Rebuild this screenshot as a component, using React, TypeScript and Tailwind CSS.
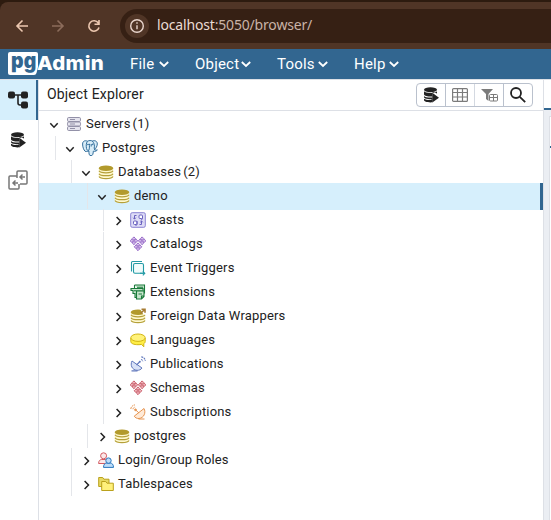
import React from "react";
import type { ReactNode } from "react";

const Chevron = ({ open }: { open?: boolean }) => (
  <svg width="16" height="16" viewBox="0 0 16 16" fill="none" stroke="#222" strokeWidth="1.500" className="shrink-0">
    {open ? <path d="M4.300 7.300 8 11.200l3.700-3.900" /> : <path d="M6.600 5 10.500 9l-3.900 4" />}
  </svg>
);

const Db = ({ arrow }: { arrow?: boolean }) => (
  <g>
    <path d="M.8 4v8.500C.8 14 4 15 8 15s7.200-1 7.200-2.500V4z" fill="#fff9cf" />
    <path d="M1 6.800c.6 1.300 3.500 2 7 2s6.400-.7 7-2M1 9.700c.6 1.300 3.500 2 7 2s6.400-.7 7-2M1 12.500c.6 1.400 3.500 2.100 7 2.100s6.400-.7 7-2.100" fill="none" stroke="#b5a03a" strokeWidth="1.200" />
    <ellipse cx="8" cy="4.200" rx="7.300" ry="2.800" fill="#b29a2c" />
    {arrow && (
      <g>
        <path d="M9.500 0H16v6.500h-2.500z" fill="#fff" />
        <path d="M10.500 5.500 14.300 1.700M11.500 1.300H15v3.500" stroke="#a67b32" strokeWidth="1.600" fill="none" />
      </g>
    )}
  </g>
);

const Cluster = ({ c, f }: { c: string; f: string }) => (
  <g fill={f} stroke={c} strokeWidth=".9">
    {[[3.9, 4.800], [12.100, 4.800], [8, 10.800]].map(([cx, cy]) => (
      <g key={cx}>
        <path d={`M${cx} ${cy - 3.900}l1.700 1.700-1.700 1.700-1.700-1.700z`} />
        <path d={`M${cx - 2.100} ${cy - 1.700}l1.700 1.700-1.700 1.700-1.700-1.700z`} />
        <path d={`M${cx + 2.100} ${cy - 1.700}l1.700 1.700-1.700 1.700-1.700-1.700z`} />
        <path d={`M${cx} ${cy + 0.5}l1.700 1.700-1.700 1.700-1.700-1.700z`} />
      </g>
    ))}
  </g>
);

const icons: Record<string, ReactNode> = {
  servers: (
    <g fill="#e5e4ee" stroke="#9391a8">
      {[1.500, 6, 10.500].map((y) => (
        <g key={y}>
          <rect x="1.500" y={y} width="13" height="4" rx="1.200" />
          <path d={`M4 ${y + 2}h5`} />
        </g>
      ))}
    </g>
  ),
  elephant: (
    <g fill="#d9edf8" stroke="#336f9d" strokeWidth="1">
      <path d="M4.800 11.300C3 13 .5 8 .6 4 .7.8 3.200.2 5.500 1.200 7.200.3 9 .4 10.300 1 13 0 15.400 1.300 15.300 4c-.1 2.500-1.600 4.500-2.700 5.800.8.600 2 .3 2.700 0-.5 1.400-2.500 1.900-4 1.400-.1 2.500-.5 4.400-2.200 4.500C6.700 15.800 7 13 6.900 10.900c-.8.500-1.500.500-2.100.4z" />
      <path d="M5.400 1.400C4 3.300 4.100 6 4.500 8.600c.2 1.300.7 1.500 2.400 2.300M10.300 1c2 2 2.500 4.700 1.900 7l.4 1.800M7.500 3.800c-.2 2.500.3 4.300-.7 6.400M9.200 4v2.500" fill="none" />
      <circle cx="6" cy="4.500" r=".4" fill="#28648c" />
      <circle cx="10.700" cy="4.300" r=".4" fill="#28648c" />
    </g>
  ),
  db: <Db />,
  wrapper: <Db arrow />,
  casts: (
    <g fill="none" stroke="#6961bf">
      <rect x=".7" y=".7" width="14.600" height="14.600" rx="1.500" fill="#dedcf6" stroke="#8b83d3" />
      <path d="M6.500 3.500h-2v3.500M3.200 5.700l1.300 1.500 1.300-1.500M9.500 12.500h2V9M10.200 10.300 11.500 9l1.300 1.300" />
      <rect x="9" y="3" width="3.500" height="3.500" rx="1" fill="#fff" />
      <rect x="3.500" y="9" width="3.500" height="3.500" rx="1" fill="#fff" />
      <path d="M12.500 5v1.500L11 8.500M7 9v3.500L5.500 14" />
    </g>
  ),
  catalogs: <Cluster c="#8f5fc2" f="#d4bcec" />,
  schemas: <Cluster c="#c4505d" f="#efb3ba" />,
  trigger: (
    <g fill="none" stroke="#229aa5" strokeWidth="1.100">
      <path d="M1.500 11.500V2.500c0-.7.300-1 1-1h9.500" />
      <path d="M13.500 13.300H5c-1 0-1.500-.5-1.500-1.500V5c0-1 .5-1.500 1.500-1.500h7c1 0 1.500.5 1.500 1.500v8.300" fill="#f0fbfb" />
      <path d="M10 13.300h4.500M12.800 11.300l2 2-2 2" />
    </g>
  ),
  extensions: (
    <g fill="#c7e5cd" stroke="#19793a" strokeWidth="1.100">
      <path d="M4.500 1h10v8h-3M4.500 1v3M1 4.500h12v6H9v3H5v-4H3v-3H1z" />
      <path d="M6.500 7H14v5.500L11.500 15h-5zM11.500 15v-3H14M4 6.800h8M7 3.200h6M8.500 10h3.500" />
    </g>
  ),
  languages: (
    <g stroke="#d2b514" strokeWidth="1">
      <path d="M.8 6v3.500c0 2 3 3.200 7.200 3.200 1.500 0 2.500-.1 3.500-.3l2.300 2.400v-3.200c1-.6 1.400-1.300 1.400-2.100V6" fill="#ffee45" />
      <ellipse cx="8" cy="5.700" rx="7.200" ry="3.700" fill="#fff27a" />
    </g>
  ),
  publication: (
    <g>
      <path d="M2 5c-2 4 0 9 5 9.300 2 .1 4-.7 5-2.300z" fill="#d9e2f7" stroke="#6279bd" />
      <path d="m6.500 9 3-3M1.500 14.900h6" fill="none" stroke="#6279bd" strokeWidth="1.100" />
      <path d="M11 3.500c1.100.1 1.800.8 1.900 1.900M11.300.900c2.200.2 3.800 1.800 4 4" fill="none" stroke="#6279bd" strokeWidth="1.100" strokeDasharray="2 .7" />
      <circle cx="9.800" cy="5.800" r="1" fill="#6279bd" />
    </g>
  ),
  subscription: (
    <g fill="#ffead7" stroke="#e69450">
      <path d="M14 4.500c2.200 4 0 9.500-5 10-2 .1-3.800-.7-4.800-2.300z" />
      <path d="m9 9-3.800-3.500M8.500 15h6" fill="none" />
      <path d="M.8 5C1 2.700 2.700 1.100 5 .9M3 5.200c.1-1.200.9-2 2.100-2.100" fill="none" strokeDasharray="2 .7" />
      <circle cx="5.500" cy="5.800" r=".9" fill="#e69450" />
    </g>
  ),
  roles: (
    <g strokeWidth="1">
      <g fill="#fbe8e9" stroke="#d35b62">
        <path d="M.6 11.500c0-3 1.700-4 3-4h4c1.300 0 3 1 3 4z" />
        <circle cx="5.600" cy="3.800" r="3" />
      </g>
      <g fill="#bedcf8" stroke="#2977bd">
        <path d="M5.500 15.400c0-3 1.500-4.300 3-4.300h4c1.500 0 3 1.300 3 4.300z" />
        <circle cx="10.500" cy="8.600" r="2.700" />
      </g>
    </g>
  ),
  folders: (
    <g fill="#fff17b" stroke="#baa11c">
      <path d="M.7 10.500V1.500h4l1.200 1.700H11v7.300z" fill="#e8da62" />
      <path d="M3.700 14.500V5.500h4l1.300 1.700h6.300v7.300z" />
    </g>
  ),
};

const Icon = ({ name }: { name: string }) => (
  <svg width="16" height="16" viewBox="0 0 16 16" className="shrink-0">{icons[name]}</svg>
);

const rows: { label: string; icon: string; depth: number; open?: boolean; count?: number }[] = [
  { label: "Servers", icon: "servers", depth: 0, open: true, count: 1 },
  { label: "Postgres", icon: "elephant", depth: 1, open: true },
  { label: "Databases", icon: "db", depth: 2, open: true, count: 2 },
  { label: "demo", icon: "db", depth: 3, open: true },
  { label: "Casts", icon: "casts", depth: 4 },
  { label: "Catalogs", icon: "catalogs", depth: 4 },
  { label: "Event Triggers", icon: "trigger", depth: 4 },
  { label: "Extensions", icon: "extensions", depth: 4 },
  { label: "Foreign Data Wrappers", icon: "wrapper", depth: 4 },
  { label: "Languages", icon: "languages", depth: 4 },
  { label: "Publications", icon: "publication", depth: 4 },
  { label: "Schemas", icon: "schemas", depth: 4 },
  { label: "Subscriptions", icon: "subscription", depth: 4 },
  { label: "postgres", icon: "db", depth: 3 },
  { label: "Login/Group Roles", icon: "roles", depth: 2 },
  { label: "Tablespaces", icon: "folders", depth: 2 },
];

const indents = ["w-0", "w-4", "w-8", "w-12", "w-16"];

const QueryIcon = ({ size }: { size: number }) => (
  <svg width={size} height={size} viewBox="0 0 16 16" fill="#222">
    <ellipse cx="7.500" cy="2.700" rx="6.500" ry="2.500" />
    <path d="M1 4.300c1 1.100 3.300 1.600 6.500 1.600S13 5.400 14 4.300v2.200L9.500 4.800v4.700C5 9.700 1.600 9 1 7.500zM1 8.900c1 1.100 4 1.700 8.500 1.500v4.900C4.400 15.700 1 14.500 1 13v-1.200c1.300 1 4.500 1.400 7.500 1.200v-.8C4 12.300 1 11.500 1 10z" />
    <path d="m9.300 5.800 6.700 5-6.700 4.800z" />
  </svg>
);

const Menu = ({ label, width }: { label: string; width: string }) => (
  <div className={`flex items-center justify-between ${width}`}>
    <span>{label}</span>
    <svg width="12" height="12" viewBox="0 0 12 12" fill="none" stroke="#fff" strokeWidth="1.800"><path d="m1.800 4 4.200 4 4.200-4" /></svg>
  </div>
);

export default function App() {
  return (
    <div className="flex h-[520px] w-[551px] flex-col overflow-hidden bg-white font-[Roboto,sans-serif] text-[#222]">
      <div className="h-[49px] shrink-0 bg-[#2d1b0f] pt-[2px]">
        <div className="flex h-[47px] items-center rounded-tl-[8px] bg-[#503526] pl-[15px]">
          <svg width="92" height="16" viewBox="0 0 92 16" fill="none" stroke="#edc8b0" strokeWidth="1.600">
            <path d="M13 8H2m5.500-5.500L2 8l5.500 5.500" />
            <path d="M37 8h11m-5.500-5.500L48 8l-5.500 5.500" stroke="#8c6c5b" />
            <path d="M83.300 5A5.200 5.200 0 1 0 84 9.500M84 2v4.300h-4.500" />
          </svg>
          <div className="ml-[13px] flex h-[34px] flex-1 items-center rounded-l-full bg-[#362014] pl-[5px]">
            <div className="flex size-6 items-center justify-center rounded-full bg-[#503526]">
              <svg width="16" height="16" viewBox="0 0 16 16" fill="none" stroke="#e9d6cd" strokeWidth="1.400"><circle cx="8" cy="8" r="6.300" /><path d="M8 7.300v4M8 4.300v1.500" /></svg>
            </div>
            <span className="ml-2 pb-[2px] font-['Noto_Sans',sans-serif] text-[14px] tracking-[-0.17px] text-[#c9b3a7]"><span className="text-[#eadbd3]">localhost</span>:5050/browser/</span>
          </div>
        </div>
      </div>

      <div className="flex h-[30px] shrink-0 items-center bg-[#326690] text-[15px] tracking-[0.2px] text-white">
        <svg width="112" height="30" viewBox="0 0 112 30" className="overflow-visible">
          <path d="M10 3h26q2 0 2 2v13l-1.500 6q-.5 2-2.500 2H10q-2 0-2-2V5q0-2 2-2z" fill="#fff" />
          <text x="11" y="18.500" textLength="25.500" lengthAdjust="spacingAndGlyphs" fontFamily="Inter" fontWeight="900" fontSize="21" fill="#326690">pg</text>
          <text x="37" y="20.700" textLength="67" lengthAdjust="spacingAndGlyphs" fontFamily="Inter" fontWeight="800" fontSize="19" fill="#fff">Admin</text>
        </svg>
        <div className="ml-[18px] flex gap-[25px]">
          <Menu label="File" width="w-[40px]" />
          <Menu label="Object" width="w-[57px]" />
          <Menu label="Tools" width="w-[52px]" />
          <Menu label="Help" width="w-[46px]" />
        </div>
      </div>

      <div className="flex min-h-0 flex-1 border-t border-[#dde0e6]">
        <div className="flex w-[39px] shrink-0 flex-col border-r border-[#dde0e6]">
          <div className="flex h-10 items-center justify-center border-r-2 border-[#326690] bg-[#d6effc]">
            <svg width="20" height="20" viewBox="0 0 20 20" fill="#222">
              <rect y="1.500" width="7" height="7" rx="2" /><rect x="13" y="1.500" width="7" height="7" rx="2" /><rect x="13" y="11.500" width="7" height="7" rx="2" />
              <path d="M6 5h8M10 5v8q0 2 2 2h2" fill="none" stroke="#222" strokeWidth="1.600" />
            </svg>
          </div>
          <div className="flex h-10 items-center justify-center pr-[3px]"><QueryIcon size={16} /></div>
          <div className="flex h-10 items-center justify-center pr-[2px]">
            <svg width="20" height="20" viewBox="0 0 20 20" fill="none" stroke="#777" strokeWidth="1.500">
              <path d="M9 6V2q0-1 1-1h8q1 0 1 1v11q0 1-1 1h-6M9 6H2Q1 6 1 7v11q0 1 1 1h8q1 0 1-1v-4M9 6v2M17 7h-5m2.500-2.500L12 7l2.500 2.500M10 13H5m2.500-2.500L5 13l2.500 2.500" />
            </svg>
          </div>
        </div>

        <div className="flex w-[504px] shrink-0 flex-col">
          <div className="flex h-[31px] shrink-0 items-center justify-between border-b border-[#dde0e6] pl-2 pr-[10px]">
            <span className="pb-[2px] text-[14px] tracking-[0.15px]">Object Explorer</span>
            <div className="flex h-6 w-[117px] overflow-hidden rounded-[4px] border border-[#bac1cd]">
              <div className="flex flex-1 items-center justify-center border-r border-[#bac1cd]"><QueryIcon size={16} /></div>
              <div className="flex flex-1 items-center justify-center border-r border-[#d4d9e1]">
                <svg width="16" height="14" viewBox="0 0 16 14" fill="none" stroke="#7b7b7b" strokeWidth="1.200"><rect x=".6" y=".6" width="14.800" height="12.800" rx="1" /><path d="M1 4.500h14M1 9h14M5.500 1v12M10.500 1v12" /></svg>
              </div>
              <div className="flex flex-1 items-center justify-center border-r border-[#bac1cd]">
                <svg width="17" height="14" viewBox="0 0 17 14" fill="#7b7b7b"><path d="M0 1h12L7.500 6v7L5 11V6z" /><rect x="8.500" y="6.500" width="8" height="6.500" rx="1" fill="#fff" stroke="#7b7b7b" /><path d="M8.500 9.500h8M12.500 7v6" stroke="#7b7b7b" /></svg>
              </div>
              <div className="flex flex-1 items-center justify-center">
                <svg width="18" height="18" viewBox="0 0 18 18" fill="none" stroke="#222" strokeWidth="1.800"><circle cx="7" cy="7" r="5" /><path d="m10.800 10.800 5.400 5.400" /></svg>
              </div>
            </div>
          </div>

          <div className="flex flex-col pt-[1px]">
            {rows.map((r, i) => (
              <div key={r.label} className={`flex items-center text-[13px] leading-none tracking-[0.17px] ${i === 3 ? "-mt-px -mb-px h-[27px] border-r-[3px] border-[#326690] bg-[#d6effc] pb-px" : i === 4 ? "h-[23px] pb-px" : "h-6"}`}>
                <div className={`h-full shrink-0 ${indents[r.depth]}`} />
                <div className={`mr-[6px] h-full w-px shrink-0 ${r.depth ? "bg-[#e4e6ea]" : ""}`} />
                <Chevron open={r.open} />
                <span className="ml-1 flex items-center pb-px"><Icon name={r.icon} /></span>
                <span className="ml-1 pb-[2px]">{r.label}</span>
                {r.count && <span className="ml-[2px] pb-[2px]">({r.count})</span>}
              </div>
            ))}
          </div>
        </div>

        <div className="flex min-w-0 flex-1 flex-col border-l border-[#dde0e6]">
          <div className="h-[30px] border-b-2 border-[#326690]" />
          <div className="flex-1 bg-[#ebeef3] pl-[5px] pt-[6px]">
            <div className="h-full border-l border-t border-[#dde0e6] bg-white pt-[29px]"><div className="h-[2px] bg-[#326690]" /></div>
          </div>
        </div>
      </div>
    </div>
  );
}
